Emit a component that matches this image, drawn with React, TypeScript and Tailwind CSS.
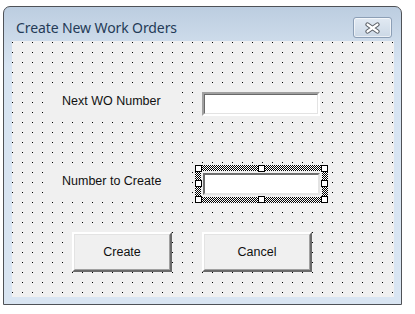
const dots =
  "bg-[#f0f0f0] bg-[conic-gradient(from_270deg_at_1px_1px,#000_90deg,transparent_0)] bg-[length:10px_10px] bg-[position:0px_1px]";

const TextBox = ({ w, h }: { w: number; h: number }) => (
  <div
    className="border-2 border-t-[#a0a0a0] border-l-[#a0a0a0] border-b-white border-r-white"
    style={{ width: w, height: h }}
  >
    <div className="w-full h-full border border-t-[#696969] border-l-[#696969] border-b-[#e3e3e3] border-r-[#e3e3e3] bg-white" />
  </div>
);

const CmdButton = ({ label, w }: { label: string; w: number }) => (
  <div
    className="h-[40px] border-2 border-t-white border-l-white border-b-[#696969] border-r-[#696969]"
    style={{ width: w }}
  >
    <div className="w-full h-full flex items-center justify-center border border-t-[#e3e3e3] border-l-[#e3e3e3] border-b-[#a0a0a0] border-r-[#a0a0a0] bg-[#f0f0f0] text-[12.5px] text-[#101010]">
      {label}
    </div>
  </div>
);

const Handle = ({ className }: { className: string }) => (
  <div className={"absolute w-[7px] h-[7px] bg-white border border-black " + className} />
);

export default function App() {
  return (
    <div className="w-[415px] h-[314px] bg-white pl-[3px] pt-[6px] font-['Liberation_Sans',Arial,sans-serif]">
      <div className="w-[399px] h-[299px] border border-[#4f5257] rounded-t-[7px] bg-[linear-gradient(#bccde0_0px,#cddbea_34px,#d7e4f2_60px,#d9e5f2_100%)] flex flex-col">
        {/* title bar */}
        <div className="h-[34px] flex items-start justify-between pl-[12px] pr-[9px]">
          <span className="mt-[11px] text-[14px] leading-[20px] text-[#243b57] font-['Noto_Sans',sans-serif] tracking-[-0.1px]">
            Create New Work Orders
          </span>
          <div className="mt-[10px] w-[39px] h-[21px] rounded-[3px] border border-[#8c9fb6] bg-[linear-gradient(#e2eaf3,#cbd8e6)] shadow-[inset_0_0_0_1px_rgba(255,255,255,0.6)] flex items-center justify-center">
            <svg width="15" height="12" viewBox="0 0 15 12">
              <path d="M2.5 2.5 L12.5 9.5 M12.5 2.5 L2.5 9.5" stroke="#5a5f66" strokeWidth="4.2" strokeLinecap="round" />
              <path d="M2.5 2.5 L12.5 9.5 M12.5 2.5 L2.5 9.5" stroke="#ffffff" strokeWidth="2.2" strokeLinecap="round" />
            </svg>
          </div>
        </div>

        {/* client area */}
        <div className={"ml-[8px] w-[382px] h-[256px] pl-[38px] flex flex-col " + dots}>
          <div className="mt-[47px] flex items-start h-[28px]">
            <span className="w-[130px] h-[28px] pl-[12px] pt-[5px] bg-[#f0f0f0] text-[12.5px] leading-[16px] text-[#101010]">
              Next WO Number
            </span>
            <div className="ml-[22px] mt-[4px]">
              <TextBox w={118} h={24} />
            </div>
          </div>

          <div className="mt-[49px] flex items-start h-[38px]">
            <span className="w-[130px] h-[30px] mt-[3px] pl-[12px] pt-[5px] bg-[#f0f0f0] text-[12.5px] leading-[16px] text-[#101010]">
              Number to Create
            </span>
            <div className="ml-[15px] relative w-[133px] h-[38px] bg-[repeating-conic-gradient(#000_0_25%,#fff_0_50%)] bg-[length:2px_2px]">
              <div className="absolute inset-[6px] bg-[#f0f0f0] p-[2px]">
                <div className="w-[117px] h-[22px] border-2 border-t-[#6e6e6e] border-l-[#6e6e6e] border-b-[#e3e3e3] border-r-[#e3e3e3] bg-white" />
              </div>
              <Handle className="left-0 top-0" />
              <Handle className="left-[63px] top-0" />
              <Handle className="right-0 top-0" />
              <Handle className="left-0 top-[15px]" />
              <Handle className="right-0 top-[15px]" />
              <Handle className="left-0 bottom-0" />
              <Handle className="left-[63px] bottom-0" />
              <Handle className="right-0 bottom-0" />
            </div>
          </div>

          <div className="mt-[29px] flex">
            <div className="ml-[22px]">
              <CmdButton label="Create" w={100} />
            </div>
            <div className="ml-[30px]">
              <CmdButton label="Cancel" w={110} />
            </div>
          </div>
        </div>
      </div>
    </div>
  );
}
